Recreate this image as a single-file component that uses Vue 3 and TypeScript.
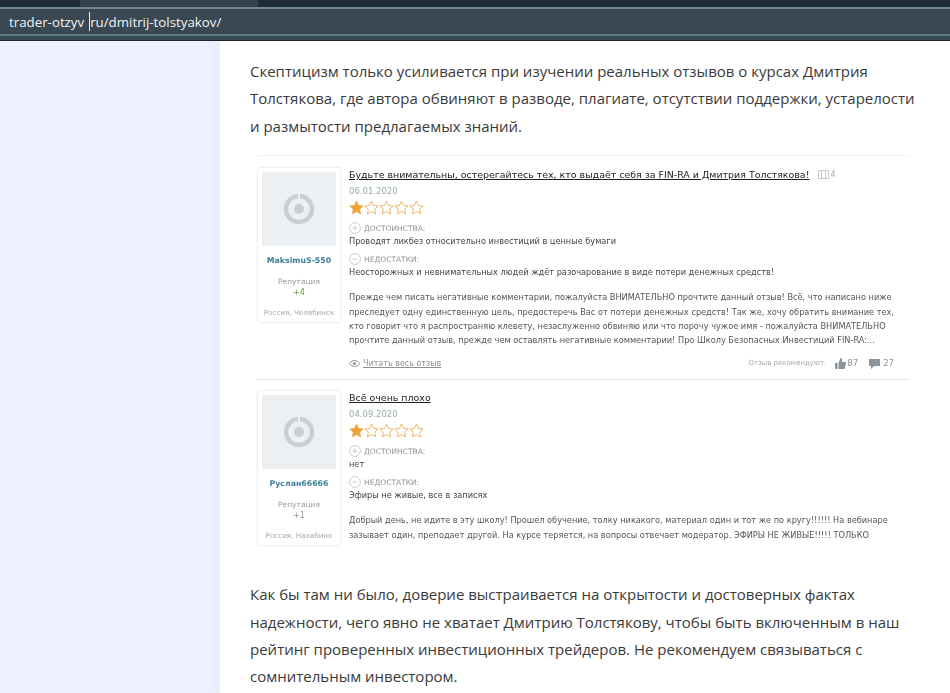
<script setup lang="ts">
interface Review {
  title: string
  date: string
  name: string
  rep: string
  repClass: string
  place: string
  pro: string
  con: string
  body: string[]
  footer: boolean
}
const reviews: Review[] = [
  {
    title: 'Будьте внимательны, остерегайтесь тех, кто выдаёт себя за FIN-RA и Дмитрия Толстякова!',
    date: '06.01.2020', name: 'MaksimuS-550', rep: '+4', repClass: 'green', place: 'Россия, Челябинск',
    pro: 'Проводят ликбез относительно инвестиций в ценные бумаги',
    con: 'Неосторожных и невнимательных людей ждёт разочарование в виде потери денежных средств!',
    body: [
      'Прежде чем писать негативные комментарии, пожалуйста ВНИМАТЕЛЬНО прочтите данный отзыв! Всё, что написано ниже',
      'преследует одну единственную цель, предостеречь Вас от потери денежных средств! Так же, хочу обратить внимание тех,',
      'кто говорит что я распространяю клевету, незаслуженно обвиняю или что порочу чужое имя - пожалуйста ВНИМАТЕЛЬНО',
      'прочтите данный отзыв, прежде чем оставлять негативные комментарии! Про Школу Безопасных Инвестиций FIN-RA:...',
    ],
    footer: true,
  },
  {
    title: 'Всё очень плохо',
    date: '04.09.2020', name: 'Руслан66666', rep: '+1', repClass: 'grey', place: 'Россия, Нахабино',
    pro: 'нет',
    con: 'Эфиры не живые, все в записях',
    body: [
      'Добрый день, не идите в эту школу! Прошел обучение, толку никакого, материал один и тот же по кругу!!!!!! На вебинаре',
      'зазывает один, преподает другой. На курсе теряется, на вопросы отвечает модератор. ЭФИРЫ НЕ ЖИВЫЕ!!!!! ТОЛЬКО',
    ],
    footer: false,
  },
]
const stars = [0, 1, 2, 3, 4]
const starPath = 'M7.5 1l2 4.4 4.7.6-3.5 3.2.9 4.7-4.1-2.3-4.1 2.3.9-4.7L.8 6l4.7-.6z'
</script>

<template>
  <div class="page">
    <header class="chrome">
      <div class="tabs"><div class="tab"></div></div>
      <div class="address">
        <span>trader-otzyv</span><span class="caret"></span><span>ru/dmitrij-tolstyakov/</span>
      </div>
    </header>
    <div class="body">
      <aside class="side"></aside>
      <main class="main">
        <p class="para first">
          Скептицизм только усиливается при изучении реальных отзывов о курсах Дмитрия<br />
          Толстякова, где автора обвиняют в разводе, плагиате, отсутствии поддержки, устарелости<br />
          и размытости предлагаемых знаний.
        </p>
        <section class="shot">
          <article v-for="r in reviews" :key="r.name" class="review" :class="{ last: !r.footer }">
            <div class="author">
              <div class="avatar">
                <svg width="34" height="34" viewBox="0 0 34 34">
                  <circle cx="17" cy="17" r="13" fill="none" stroke="#c9ced2" stroke-width="4.5" />
                  <circle cx="17" cy="17" r="5" fill="#c9ced2" />
                  <rect x="16" y="1" width="2" height="5" fill="#eef1f3" />
                </svg>
              </div>
              <div class="name">{{ r.name }}</div>
              <div class="rep-label">Репутация</div>
              <div class="rep" :class="r.repClass">{{ r.rep }}</div>
              <div class="place">{{ r.place }}</div>
            </div>
            <div class="content">
              <div class="title-row">
                <a class="title">{{ r.title }}</a>
                <span v-if="r.footer" class="photos">
                  <svg width="11" height="9" viewBox="0 0 11 9"><path d="M.5.5h10v8H.5zM3.500.5v8M7.500.5v8" fill="none" stroke="#c4c8cc" /></svg>
                  4
                </span>
              </div>
              <div class="date">{{ r.date }}</div>
              <div class="stars">
                <svg v-for="s in stars" :key="s" width="15" height="15" viewBox="0 0 15 15">
                  <path :d="starPath" :fill="s === 0 ? '#f0a030' : '#fff'" stroke="#eeb465" stroke-width="1" />
                </svg>
              </div>
              <div class="label">
                <svg width="12" height="12" viewBox="0 0 12 12"><circle cx="6" cy="6" r="5.400" fill="none" stroke="#c8cccf" /><path d="M3.500 6h5M6 3.500v5" stroke="#c8cccf" /></svg>
                ДОСТОИНСТВА:
              </div>
              <div class="line">{{ r.pro }}</div>
              <div class="label con">
                <svg width="12" height="12" viewBox="0 0 12 12"><circle cx="6" cy="6" r="5.400" fill="none" stroke="#c8cccf" /><path d="M3.500 6h5" stroke="#c8cccf" /></svg>
                НЕДОСТАТКИ:
              </div>
              <div class="line">{{ r.con }}</div>
              <div class="text">
                <div v-for="l in r.body" :key="l">{{ l }}</div>
              </div>
              <div v-if="r.footer" class="foot">
                <a class="read">
                  <svg width="11" height="9" viewBox="0 0 11 9"><path d="M.5 4.500C2 2.500 3.500 1.500 5.500 1.500s3.500 1 5 3c-1.500 2-3 3-5 3s-3.500-1-5-3z" fill="none" stroke="#8a9094" /><circle cx="5.500" cy="4.500" r="1.500" fill="#8a9094" /></svg>
                  Читать весь отзыв
                </a>
                <span class="rec">Отзыв рекомендуют:</span>
                <svg class="thumb" width="11" height="11" viewBox="0 0 11 11"><path d="M0 5h2.500v6H0zM3.500 5l2-5c1 0 1.500.7 1.500 1.500V4h3c.7 0 1 .5 1 1l-1 5c-.1.6-.5 1-1 1H3.500z" fill="#8a949c" /></svg>
                <span class="count first-count">87</span>
                <svg class="bubble" width="11" height="11" viewBox="0 0 11 11"><path d="M0 1h11v7H5l-3 3V8H0z" fill="#8a949c" /></svg>
                <span class="count">27</span>
              </div>
            </div>
          </article>
        </section>
        <p class="para second">
          Как бы там ни было, доверие выстраивается на открытости и достоверных фактах<br />
          надежности, чего явно не хватает Дмитрию Толстякову, чтобы быть включенным в наш<br />
          рейтинг проверенных инвестиционных трейдеров. Не рекомендуем связываться с<br />
          сомнительным инвестором.
        </p>
      </main>
    </div>
  </div>
</template>

<style>
html, body { margin: 0; background: #fff; overflow: hidden; }
</style>

<style scoped>
.page { width: 950px; height: 693px; overflow: hidden; font-family: "Open Sans", sans-serif; display: flex; flex-direction: column; }
.chrome { height: 41px; flex: none; background: #3a4853; border-bottom: 1px solid #1c2329; box-sizing: border-box; display: flex; flex-direction: column; }
.tabs { height: 7px; flex: none; background: #1f2b34; padding-left: 80px; border-bottom: 2px solid #6b8794; }
.tab { width: 178px; height: 7px; background: #33424c; }
.address { height: 25px; flex: none; display: flex; align-items: center; padding-left: 9px; color: #f1f3f4; font-size: 13.300px; border-bottom: 2px solid #5d7c8a; }
.caret { width: 1px; height: 19px; background: #e8ecef; margin-left: 5px; }
.body { flex: 1; display: flex; min-height: 0; }
.side { width: 220px; flex: none; background: linear-gradient(to right, #eef2fe 0, #eef2fe 205px, #e8ecfa 220px); }
.main { flex: 1; padding-left: 30px; }
.para { margin: 0; font-size: 15px; line-height: 27.300px; color: #3a3a3a; white-space: nowrap; }
.first { padding-top: 17px; }
.shot { width: 652px; margin: 15.500px 0 0 7px; border-top: 1px solid #f1f1f1; font-family: "DejaVu Sans", sans-serif; filter: blur(.35px); }
.review { display: flex; padding-top: 11px; height: 212px; border-bottom: 1px solid #e6e6e6; }
.review.last { border-bottom: 0; height: 172px; padding-top: 10px; }
.author { width: 84px; height: 156px; flex: none; box-sizing: border-box; border: 1px solid #eeeeee; border-radius: 3px; padding: 4px; text-align: center; margin-right: 8px; font-size: 8px; color: #9a9a9a; box-shadow: 0 0 2px #f3f3f3; }
.avatar { height: 74px; background: #edf0f3; display: flex; align-items: center; justify-content: center; }
.name { margin-top: 10px; font-size: 7.800px; font-weight: 700; color: #3c7f99; white-space: nowrap; }
.rep-label { margin-top: 12px; font-size: 7.500px; }
.rep { margin-top: 2px; font-size: 8px; }
.rep.green { color: #6f9a3a; }
.place { margin-top: 11px; font-size: 7.200px; white-space: nowrap; color: #a8a8a8; }
.content { flex: 1; min-width: 0; font-size: 8.200px; color: #444; }
.title-row { display: flex; align-items: center; height: 14px; gap: 9px; }
.title { font-size: 9.450px; color: #222; text-decoration: underline; white-space: nowrap; }
.photos { display: inline-flex; align-items: center; gap: 1px; font-size: 8px; color: #aaa; }
.date { margin-top: 5px; font-size: 8.500px; color: #9aa; height: 10px; line-height: 10px; }
.stars { display: flex; margin-top: 4px; height: 16px; }
.label { margin-top: 6px; display: flex; align-items: center; gap: 3px; font-size: 7.500px; color: #8f9396; height: 12px; }
.label.con { margin-top: 5px; }
.line { margin-top: 1px; height: 13px; line-height: 13px; color: #444; white-space: nowrap; }
.text { margin-top: 11px; line-height: 14.200px; white-space: nowrap; color: #555; }
.foot { display: flex; align-items: center; margin-top: 10px; height: 12px; font-size: 8px; color: #999; padding-right: 15px; }
.read { display: inline-flex; gap: 3px; align-items: center; text-decoration: underline; color: #8a9094; }
.rec { margin-left: auto; font-size: 7px; margin-right: 9px; color: #a8a8a8; }
.count { font-size: 8.500px; color: #8a949c; margin-left: 3px; }
.first-count { margin-left: 1px; }
.bubble { margin-left: 11px; }
.second { margin-top: 19px; }
</style>
